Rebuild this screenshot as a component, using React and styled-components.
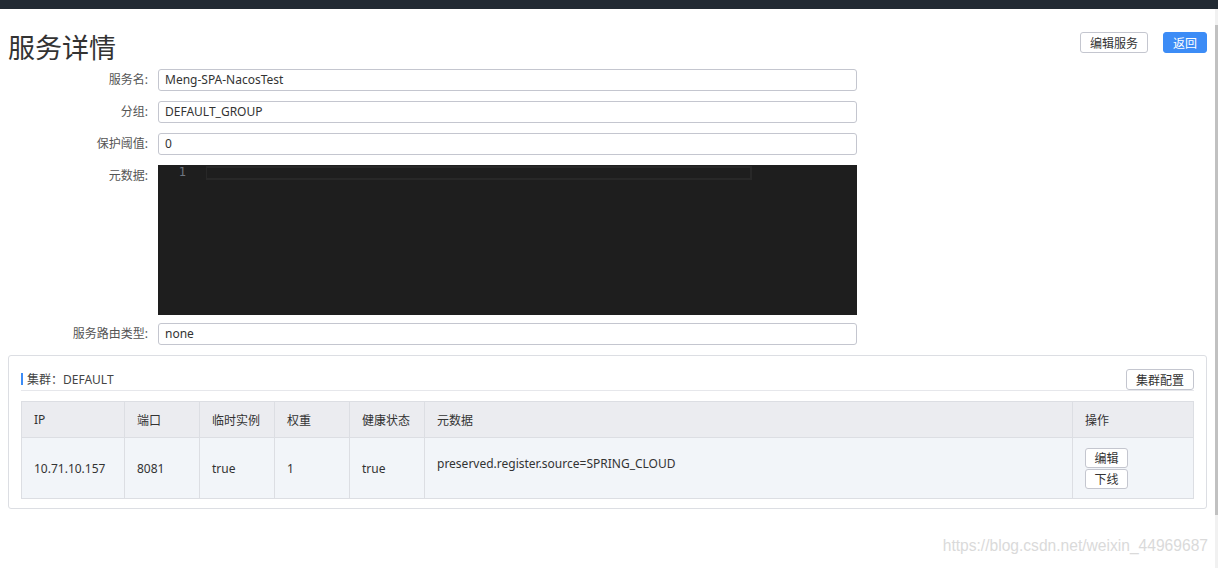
import styled, { createGlobalStyle } from "styled-components";

const Global = createGlobalStyle`
    html, body {
        margin: 0;
        padding: 0;
        background: #fff;
    }
    body {
        font: 12px "Noto Sans", "Noto Sans CJK SC", sans-serif;
        color: #333;
        overflow: hidden;
    }
`

const Page = styled.div`
    width: 1218px;
    height: 568px;
    display: flex;
    flex-direction: column;
    position: relative;
`

const TopBar = styled.div`
    height: 9px;
    background: #222a33;
    flex: none;
`

const Body = styled.div`
    flex: 1;
    display: flex;
`

const Main = styled.div`
    flex: 1;
    padding: 0 8px;
`

const ScrollTrack = styled.div`
    width: 4px;
    background: #f1f1f1;
    padding-top: 16px;
    display: flex;
    flex-direction: column;
    div {
        height: 490px;
        background: #c1c1c1;
    }
`

const Header = styled.div`
    display: flex;
    align-items: flex-start;
    padding-top: 18px;
    margin-bottom: 2px;
    h1 {
        flex: 1;
        margin: 0;
        font: 400 27px/40px "Noto Sans CJK SC", sans-serif;
        color: #333;
    }
`

const Actions = styled.div`
    display: flex;
    gap: 15px;
    margin-top: 5px;
`

const Button = styled.button`
    box-sizing: border-box;
    height: ${p => p.$h || 21}px;
    width: ${p => p.$w}px;
    padding: 0;
    font: 12px "Noto Sans CJK SC", sans-serif;
    color: ${p => p.$primary ? "#fff" : "#333"};
    background: ${p => p.$primary ? "#3c8cf6" : "#fff"};
    border: 1px solid ${p => p.$primary ? "#3c8cf6" : "#c4c6cf"};
    border-radius: 3px;
    display: block;
`

const FormRow = styled.div`
    display: flex;
    align-items: ${p => p.$top ? "flex-start" : "center"};
    margin-bottom: ${p => p.$gap ?? 10}px;
`

const Label = styled.label`
    width: 150px;
    box-sizing: border-box;
    padding-right: 10px;
    text-align: right;
    color: #555;
    font-size: 12px;
    line-height: 22px;
`

const Input = styled.div`
    box-sizing: border-box;
    width: 699px;
    height: 22px;
    border: 1px solid #c4c6cf;
    border-radius: 3px;
    padding: 0 6px;
    line-height: 20px;
    color: #333;
    font-size: 12px;
`

const Editor = styled.div`
    width: 699px;
    height: 150px;
    background: #1e1e1e;
    display: flex;
    align-items: flex-start;
`

const Gutter = styled.div`
    width: 48px;
    padding-top: 1px;
    padding-right: 20px;
    box-sizing: border-box;
    text-align: right;
    font: 12px/13px "DejaVu Sans Mono", monospace;
    color: #6e7681;
`

const CurrentLine = styled.div`
    margin-top: 1px;
    width: 546px;
    height: 14px;
    border: 2px solid #282828;
    border-left-width: 1px;
    box-sizing: border-box;
`

const Panel = styled.div`
    border: 1px solid #dcdee3;
    border-radius: 3px;
    padding: 12px 12px 9px;
`

const PanelHead = styled.div`
    display: flex;
    justify-content: space-between;
    align-items: center;
    height: 22px;
    border-bottom: 1px solid #e6e7eb;
    margin-bottom: 10px;
`

const ClusterTitle = styled.div`
    display: flex;
    align-items: center;
    color: #444;
    font-size: 12px;
    &::before {
        content: "";
        width: 2px;
        height: 12px;
        background: #3c8cf6;
        margin-right: 4px;
    }
`

const Table = styled.table`
    width: 1172px;
    border-collapse: collapse;
    table-layout: fixed;
    font-size: 12px;
    color: #333;
    th, td {
        border: 1px solid #dcdee3;
        padding: 0 12px;
        text-align: left;
        font-weight: 400;
    }
    th {
        background: #ebecf0;
        height: 35px;
        color: #333;
    }
    td {
        background: #f2f5f9;
        height: 60px;
        vertical-align: middle;
    }
`

const Meta = styled.div`
    padding-bottom: 9px;
`

const OpButtons = styled.div`
    display: flex;
    flex-direction: column;
    gap: 1px;
`

const Watermark = styled.div`
    position: absolute;
    right: 10px;
    top: 537px;
    font: 15.6px "Liberation Sans", Arial, sans-serif;
    color: #dadada;
    pointer-events: none;
`

const columns = [
    { title: "IP", w: 103 },
    { title: "端口", w: 75 },
    { title: "临时实例", w: 75 },
    { title: "权重", w: 75 },
    { title: "健康状态", w: 75 },
    { title: "元数据", w: 648 },
    { title: "操作", w: 121 },
]

export default function App() {
    return <Page>
        <Global />
        <TopBar />
        <Body>
            <Main>
                <Header>
                    <h1>服务详情</h1>
                    <Actions>
                        <Button $w={68}>编辑服务</Button>
                        <Button $w={44} $primary>返回</Button>
                    </Actions>
                </Header>
                <FormRow>
                    <Label>服务名:</Label>
                    <Input>Meng-SPA-NacosTest</Input>
                </FormRow>
                <FormRow>
                    <Label>分组:</Label>
                    <Input>DEFAULT_GROUP</Input>
                </FormRow>
                <FormRow>
                    <Label>保护阈值:</Label>
                    <Input>0</Input>
                </FormRow>
                <FormRow $top $gap={8}>
                    <Label>元数据:</Label>
                    <Editor>
                        <Gutter>1</Gutter>
                        <CurrentLine />
                    </Editor>
                </FormRow>
                <FormRow>
                    <Label>服务路由类型:</Label>
                    <Input>none</Input>
                </FormRow>
                <Panel>
                    <PanelHead>
                        <ClusterTitle>集群：DEFAULT</ClusterTitle>
                        <Button $w={68}>集群配置</Button>
                    </PanelHead>
                    <Table>
                        <colgroup>
                            {columns.map(c => <col key={c.title} style={{ width: c.w }} />)}
                        </colgroup>
                        <thead>
                            <tr>{columns.map(c => <th key={c.title}>{c.title}</th>)}</tr>
                        </thead>
                        <tbody>
                            <tr>
                                <td>10.71.10.157</td>
                                <td>8081</td>
                                <td>true</td>
                                <td>1</td>
                                <td>true</td>
                                <td><Meta>preserved.register.source=SPRING_CLOUD</Meta></td>
                                <td>
                                    <OpButtons>
                                        <Button $w={43} $h={20}>编辑</Button>
                                        <Button $w={43} $h={20}>下线</Button>
                                    </OpButtons>
                                </td>
                            </tr>
                        </tbody>
                    </Table>
                </Panel>
            </Main>
            <ScrollTrack><div /></ScrollTrack>
        </Body>
        <Watermark>https://blog.csdn.net/weixin_44969687</Watermark>
    </Page>
}
